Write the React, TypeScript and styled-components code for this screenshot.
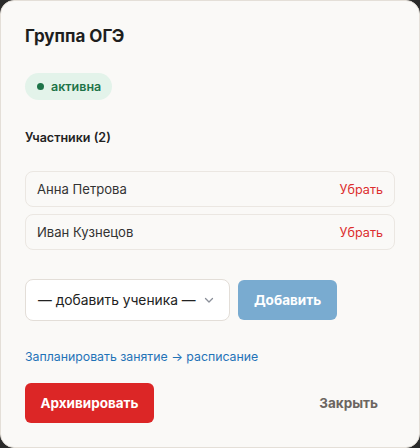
import React from "react";
import styled, { createGlobalStyle } from "styled-components";

const Global = createGlobalStyle`
  html, body {
    margin: 0;
    padding: 0;
    background: #2a2a2a;
  }
  * { box-sizing: border-box; }
`;

type Member = { id: number; name: string };

const members: Member[] = [
  { id: 1, name: "Анна Петрова" },
  { id: 2, name: "Иван Кузнецов" },
];

const Modal = styled.div`
  width: 420px;
  height: 448px;
  background: #faf9f7;
  border: 1px solid #e4dfd8;
  border-radius: 14px;
  padding: 24px 24px 0 24px;
  font-family: Inter, "Noto Sans", sans-serif;
  color: #222;
  display: flex;
  flex-direction: column;
`;

const Title = styled.h2`
  margin: 0;
  font-size: 17px;
  line-height: 22px;
  font-weight: 700;
  color: #1e1e1e;
`;

const Badge = styled.span`
  align-self: flex-start;
  margin-top: 26px;
  display: inline-flex;
  align-items: center;
  gap: 7px;
  height: 27px;
  padding: 0 11px 0 12px;
  border-radius: 14px;
  background: #e3f3ea;
  color: #1d7348;
  font-size: 12.5px;
  font-weight: 600;
`;

const Dot = styled.span`
  width: 7px;
  height: 7px;
  border-radius: 50%;
  background: #1d7348;
`;

const SectionLabel = styled.h3`
  margin: 29px 0 0 0;
  font-size: 12.5px;
  line-height: 18px;
  font-weight: 600;
  color: #222;
`;

const MemberList = styled.div`
  margin-top: 24px;
  display: flex;
  flex-direction: column;
  gap: 7px;
`;

const MemberRow = styled.div`
  height: 36px;
  display: flex;
  align-items: center;
  justify-content: space-between;
  padding: 0 11px;
  border: 1px solid #ebe7e2;
  border-radius: 8px;
  background: #faf9f7;
`;

const MemberName = styled.span`
  font-size: 13.1px;
  color: #333;
`;

const RemoveLink = styled.button`
  border: none;
  background: none;
  padding: 0;
  font-family: inherit;
  font-size: 12.6px;
  color: #dc2e2e;
  cursor: pointer;
`;

const AddRow = styled.div`
  margin-top: 29px;
  display: flex;
  align-items: center;
  gap: 8px;
`;

const SelectBox = styled.div`
  width: 205px;
  height: 42px;
  display: flex;
  align-items: center;
  justify-content: space-between;
  padding: 0 14px 0 12px;
  background: #fff;
  border: 1px solid #e3ded8;
  border-radius: 8px;
  font-size: 13.8px;
  color: #222;
  white-space: nowrap;
`;

const AddButton = styled.button<{ $disabled?: boolean }>`
  width: 99px;
  height: 40px;
  padding: 0;
  border: none;
  border-radius: 6px;
  background: ${(p) => (p.$disabled ? "#79abd0" : "#2f7fbf")};
  color: #fff;
  font-family: inherit;
  font-size: 13.5px;
  font-weight: 700;
`;

const ScheduleLink = styled.a`
  margin-top: 27px;
  font-size: 12.3px;
  line-height: 18px;
  color: #1f73b7;
  text-decoration: none;
`;

const Footer = styled.div`
  margin-top: 17px;
  display: flex;
  align-items: center;
  justify-content: space-between;
`;

const DangerButton = styled.button`
  width: 129px;
  height: 40px;
  padding: 0;
  border: none;
  border-radius: 6px;
  background: #dc2626;
  color: #fff;
  font-family: inherit;
  font-size: 13.5px;
  font-weight: 700;
`;

const GhostButton = styled.button`
  height: 40px;
  padding: 0 17px 0 16px;
  border: none;
  background: none;
  color: #6b6560;
  font-family: inherit;
  font-size: 13.5px;
  font-weight: 700;
`;

const Chevron = () => (
  <svg width="12" height="12" viewBox="0 0 12 12" fill="none">
    <path d="M2.5 4.5L6 8l3.5-3.5" stroke="#8a8f99" strokeWidth="1.3" strokeLinecap="round" strokeLinejoin="round" />
  </svg>
);

export default function App() {
  return (
    <>
      <Global />
      <Modal>
        <Title>Группа ОГЭ</Title>
        <Badge>
          <Dot />
          активна
        </Badge>
        <SectionLabel>Участники ({members.length})</SectionLabel>
        <MemberList>
          {members.map((m) => (
            <MemberRow key={m.id}>
              <MemberName>{m.name}</MemberName>
              <RemoveLink>Убрать</RemoveLink>
            </MemberRow>
          ))}
        </MemberList>
        <AddRow>
          <SelectBox>
            <span>— добавить ученика —</span>
            <Chevron />
          </SelectBox>
          <AddButton $disabled>Добавить</AddButton>
        </AddRow>
        <ScheduleLink href="#">Запланировать занятие → расписание</ScheduleLink>
        <Footer>
          <DangerButton>Архивировать</DangerButton>
          <GhostButton>Закрыть</GhostButton>
        </Footer>
      </Modal>
    </>
  );
}
